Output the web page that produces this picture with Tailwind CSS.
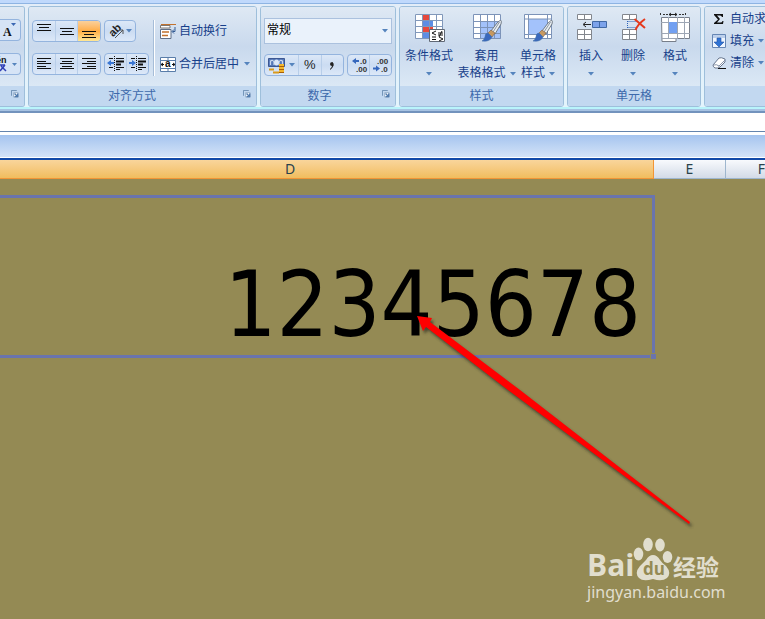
<!DOCTYPE html>
<html lang="zh-CN">
<head>
<meta charset="utf-8">
<title>Spreadsheet</title>
<script src="https://cdn.jsdelivr.net/npm/@tailwindcss/browser@4"></script>
</head>
<body class="flex h-screen flex-col overflow-hidden bg-[#948a54] font-['Liberation_Sans','Noto_Sans_CJK_SC',sans-serif] text-xs text-[#173f8a]">

<svg class="hidden">
  <symbol id="down" viewBox="0 0 6 4"><path d="M0 0H6L3 3.5Z" fill="#5584bd"/></symbol>
  <symbol id="launch" viewBox="0 0 9 9"><path d="M.5 6.500V.5H6.500" fill="none" stroke="#6588ad"/><path d="M3 3H8V8H3Z" fill="#fff" stroke="#91aac5"/><path d="M4 4L7 7M7.500 4V7.500H4" fill="none" stroke="#507bad" stroke-width="1.500"/></symbol>
  <symbol id="grid" viewBox="0 0 32 32"><path d="M2 1H30V26H2Z" fill="#fff"/><path d="M9 8H30V26H9Z" fill="#a3c2fb"/><path d="M2.500 1.500H29.500V25.500H2.500ZM2 8.500H30M2 14.500H30M2 20.500H30M9.500 1V26M16.500 1V26M23.500 1V26" fill="none" stroke="#7c93b8"/></symbol>
  <symbol id="brush" viewBox="0 0 20 22"><path d="M18.500 0Q20 1 19 4L13 14L9 11L15 3Z" fill="#e8edf1" stroke="#59636f" stroke-width=".8"/><path d="M17.500 2L11 12" stroke="#8b98a5"/><path d="M9 10L13 13L10 17L6 13Z" fill="#c79961" stroke="#866b55" stroke-width=".7"/><path d="M6 13Q3 13 3 17Q2 20 0 21Q8 22 10 17Z" fill="#3a68bd" stroke="#4673ad" stroke-width=".6"/></symbol>
</svg>

<header class="shrink-0 border-b-2 border-[#7393bd] bg-[#c0d9fc]">
  <div class="h-1 border-b border-[#8eb4e3]"></div>
  <div class="flex gap-[3px] overflow-hidden border-b-2 border-b-[#b9f4fb] bg-linear-to-b from-[#e3edf8] to-[#e3f4fc] pt-0.5">

    <section aria-label="字体" class="flex h-[101px] w-[25px] shrink-0 flex-col overflow-hidden rounded-r-[3px] border border-l-0 border-[#9ebfdb] bg-[#d2e0f0]">
      <div class="flex grow flex-col gap-3 bg-linear-to-b from-[#dfe9f4] via-[#c9d9ed] to-[#dbe8f5] pt-3">
        <button aria-label="缩小字号" class="h-[22px] w-[21px] rounded-r-sm border border-l-0 border-[#94b4de] bg-[#d6e4f6]"><svg class="h-5 w-5" viewBox="0 0 20 20"><path d="M11 3H16L13.500 6Z" fill="#3b67b3"/><text x="3" y="16" font-family="Liberation Serif" font-weight="bold" font-size="12" fill="#111">A</text></svg></button>
        <button aria-label="拼音指南" class="h-[22px] w-[21px] rounded-r-sm border border-l-0 border-[#94b4de] bg-[#d6e4f6]"><svg class="h-5 w-5" viewBox="0 0 20 20"><text x="-4" y="9" font-weight="bold" font-size="9" fill="#111">én</text><path d="M0 11H5M0 17L5 11M1 12L6 17" stroke="#3140b5" stroke-width="1.500"/><path d="M12 9H17L14.500 12Z" fill="#5584bd"/></svg></button>
      </div>
      <div class="flex h-5 items-center justify-end bg-[#c2d8f0] pr-[5px] pb-1"><button aria-label="字体设置"><svg class="block h-2 w-2"><use href="#launch"/></svg></button></div>
    </section>

    <section aria-label="对齐方式" class="flex h-[101px] w-[229px] shrink-0 flex-col overflow-hidden rounded-[3px] border border-[#9ebfdb]">
      <div class="flex grow bg-linear-to-b from-[#dfe9f4] via-[#c9d9ed] to-[#dbe8f5] pt-[13px] pl-[3px]">
        <div class="flex flex-col gap-[11px]">
          <div class="flex gap-[3px]">
            <div class="flex h-[22px] w-[69px] divide-x divide-[#b8cee9] overflow-hidden rounded-sm border border-[#94b4de] bg-linear-to-b from-[#dce8f7] via-[#cbdcf2] to-[#dce8f8]">
              <button aria-label="顶端对齐" class="flex-1"><svg shape-rendering="crispEdges" class="mx-auto block h-5 w-5" viewBox="0 0 20 20"><path d="M3 3.500H17M5 6.500H15M3 9.500H17" stroke="#111"/></svg></button>
              <button aria-label="垂直居中" class="flex-1"><svg shape-rendering="crispEdges" class="mx-auto block h-5 w-5" viewBox="0 0 20 20"><path d="M3 7.500H17M5 10.500H15M3 13.500H17" stroke="#111"/></svg></button>
              <button aria-label="底端对齐" class="flex-1 bg-linear-to-b from-[#fad09a] via-[#ffad43] to-[#ffe795]"><svg shape-rendering="crispEdges" class="mx-auto block h-5 w-5" viewBox="0 0 20 20"><path d="M3 10.500H17M5 13.500H15M3 16.500H17" stroke="#111"/></svg></button>
            </div>
            <button aria-label="方向" class="flex h-[22px] w-8 items-center rounded-sm border border-[#94b4de] bg-linear-to-b from-[#dce8f7] via-[#cbdcf2] to-[#dce8f8] pl-[3px]"><svg class="h-4 w-[18px] shrink-0" viewBox="0 0 18 16"><text x="1" y="11" transform="rotate(-45 7 8)" font-family="Liberation Sans" font-weight="bold" font-size="11" fill="#222">ab</text><path d="M7 15L15 7M11 7H15V11" fill="none" stroke="#555"/></svg><svg class="h-1 w-1.5 shrink-0"><use href="#down"/></svg></button>
          </div>
          <div class="flex gap-[3px]">
            <div class="flex h-[22px] w-[69px] divide-x divide-[#b8cee9] rounded-sm border border-[#94b4de] bg-linear-to-b from-[#dce8f7] via-[#cbdcf2] to-[#dce8f8]">
              <button aria-label="左对齐" class="flex-1"><svg shape-rendering="crispEdges" class="mx-auto block h-5 w-5" viewBox="0 0 20 20"><path d="M3 4.500H17M3 7.500H12M3 9.500H17M3 12.500H12M3 14.500H17" stroke="#111"/></svg></button>
              <button aria-label="居中" class="flex-1"><svg shape-rendering="crispEdges" class="mx-auto block h-5 w-5" viewBox="0 0 20 20"><path d="M3 4.500H17M5 7.500H15M3 9.500H17M5 12.500H15M3 14.500H17" stroke="#111"/></svg></button>
              <button aria-label="右对齐" class="flex-1"><svg shape-rendering="crispEdges" class="mx-auto block h-5 w-5" viewBox="0 0 20 20"><path d="M3 4.500H17M8 7.500H17M3 9.500H17M8 12.500H17M3 14.500H17" stroke="#111"/></svg></button>
            </div>
            <div class="flex h-[22px] w-[45px] divide-x divide-[#b8cee9] rounded-sm border border-[#94b4de] bg-linear-to-b from-[#dce8f7] via-[#cbdcf2] to-[#dce8f8]">
              <button aria-label="减少缩进" class="flex-1"><svg class="mx-auto block h-5 w-5" viewBox="0 0 20 20"><path d="M3 4.500H7M10 4.500H18M3 13.500H7M10 13.500H18M10 15.500H14" stroke="#111"/><path d="M10 7.500H18M10 10.500H15" stroke="#111" stroke-width="2"/><path d="M8.500 2V18" stroke="#111" stroke-dasharray="1 1"/><path d="M1 9L5 6V8H8V10H5V12Z" fill="#3976d3"/></svg></button>
              <button aria-label="增加缩进" class="flex-1"><svg class="mx-auto block h-5 w-5" viewBox="0 0 20 20"><path d="M3 4.500H7M10 4.500H18M3 13.500H7M10 13.500H18M10 15.500H14" stroke="#111"/><path d="M10 7.500H18M10 10.500H15" stroke="#111" stroke-width="2"/><path d="M8.500 2V18" stroke="#111" stroke-dasharray="1 1"/><path d="M8 9L4 6V8H1V10H4V12Z" fill="#3976d3"/></svg></button>
            </div>
          </div>
        </div>
        <div class="ml-1 h-14 w-0.5 border-l border-[#a6bdd8] bg-white"></div>
        <div class="ml-[5px] flex flex-col gap-[11px]">
          <button class="flex h-[22px] items-center gap-[3px]"><svg class="h-4 w-4" viewBox="0 0 16 16"><path d="M.5 2.500H10V5H.5Z" fill="#fff" stroke="#7d7772"/><path d="M1 1.500H16" stroke="#c2722e"/><path d="M.5 6.500H11V15.500H.5Z" fill="#fff" stroke="#5f6f87"/><path d="M2 9H9M2 12.500H8" stroke="#c2722e" stroke-width="1.500"/><path d="M15 4V8.500H12.500M14 6.500L12 8.500L14 10.500" fill="none" stroke="#335b93"/></svg>自动换行</button>
          <button class="flex h-[22px] items-center gap-[3px]"><svg class="h-4 w-4" viewBox="0 0 16 16"><path d="M.5 1.500H15.500V15.500H.5Z" fill="#fff" stroke="#597da9"/><path d="M1 4.500H15M1 12.500H15M8 1V4M8 13V16" stroke="#597da9"/><path d="M1 8.500H4M15 8.500H12M3 7L1 8.500L3 10M13 7L15 8.500L13 10" fill="none" stroke="#111"/><text x="5" y="11" font-family="Liberation Sans" font-size="10" font-weight="bold" fill="#111">a</text></svg>合并后居中<svg class="ml-0.5 h-1 w-1.5"><use href="#down"/></svg></button>
        </div>
      </div>
      <div class="flex h-5 items-center bg-[#c2d8f0] pr-[5px] text-[#3d69ab]"><span class="grow text-center -indent-2">对齐方式</span><button aria-label="对齐设置" class="pb-1"><svg class="block h-2 w-2"><use href="#launch"/></svg></button></div>
    </section>

    <section aria-label="数字" class="flex h-[101px] w-[136px] shrink-0 flex-col overflow-hidden rounded-[3px] border border-[#9ebfdb]">
      <div class="flex grow flex-col gap-[10px] bg-linear-to-b from-[#dfe9f4] via-[#c9d9ed] to-[#dbe8f5] px-[3px] pt-[11px]">
        <div class="relative">
          <select aria-label="数字格式" class="block h-[26px] w-full appearance-none border border-[#abc1de] bg-[#eaf2fb] pb-0.5 pl-0.5 text-black"><option>常规</option></select>
          <svg class="pointer-events-none absolute top-[11px] right-1 h-1 w-1.5"><use href="#down"/></svg>
        </div>
        <div class="flex justify-between">
          <div class="flex h-[22px] w-20 divide-x divide-[#b8cee9] rounded-sm border border-[#94b4de] bg-linear-to-b from-[#dce8f7] via-[#cbdcf2] to-[#dce8f8]">
            <button aria-label="会计数字格式" class="flex w-[34px] items-center gap-[3px] pl-[3px]"><svg class="h-[17px] w-[18px] shrink-0" viewBox="0 0 18 17"><path d="M.5 1.500H16.500V9.500H.5Z" fill="#5578b8" stroke="#3d5893"/><path d="M2.500 8V4Q5 2.500 6 5V8M14.500 8V4Q12 2.500 11 5V8" fill="none" stroke="#c9d8ef" stroke-width="1.200"/><ellipse cx="8.500" cy="5.500" rx="2.500" ry="3" fill="#dbe6f7"/><path d="M11 7H16V16H11Z" fill="#f4b62d"/><path d="M11 9.500H16M11 12.500H16M11 15.500H16" stroke="#a65f09"/><path d="M1 12.500H6M5 15.500H11" stroke="#d99a1d" stroke-width="2"/></svg><svg class="h-1 w-1.5 shrink-0"><use href="#down"/></svg></button>
            <button aria-label="百分比样式" class="flex-1 text-[13px] leading-5 text-[#222]">%</button>
            <button aria-label="千位分隔样式" class="flex-1"><svg class="mx-auto block h-5 w-5" viewBox="0 0 20 20"><path d="M8 9Q8 7 10.500 7Q14 10 8 15L8 14Q10 12 10 11Q8 11 8 9Z" fill="#222"/></svg></button>
          </div>
          <div class="flex h-[22px] w-[45px] divide-x divide-[#b8cee9] rounded-sm border border-[#94b4de] bg-linear-to-b from-[#dce8f7] via-[#cbdcf2] to-[#dce8f8]">
            <button aria-label="增加小数位数" class="flex-1"><svg class="mx-auto block h-5 w-5" viewBox="0 0 20 20" font-family="Liberation Sans" font-weight="bold" font-size="8" fill="#333"><text x="11" y="9">.0</text><text x="7" y="17">.00</text><path d="M3 6L7 3V5H10V7H7V9Z" fill="#3567bd"/></svg></button>
            <button aria-label="减少小数位数" class="flex-1"><svg class="mx-auto block h-5 w-5" viewBox="0 0 20 20" font-family="Liberation Sans" font-weight="bold" font-size="8" fill="#333"><text x="6" y="9">.00</text><text x="10" y="17">.0</text><path d="M9 13.500L5 10.500V12.500H2V14.500H5V16.500Z" fill="#3567bd"/></svg></button>
          </div>
        </div>
      </div>
      <div class="flex h-5 items-center bg-[#c2d8f0] pr-[5px] text-[#3d69ab]"><span class="grow text-center -indent-1">数字</span><button aria-label="数字设置" class="pb-1"><svg class="block h-2 w-2"><use href="#launch"/></svg></button></div>
    </section>

    <section aria-label="样式" class="flex h-[101px] w-[165px] shrink-0 flex-col overflow-hidden rounded-[3px] border border-[#9ebfdb]">
      <div class="flex grow bg-linear-to-b from-[#dfe9f4] via-[#c9d9ed] to-[#dbe8f5] pt-[5px] leading-[17px]">
        <button class="flex w-[58px] flex-col items-center"><svg class="h-9 w-8" viewBox="0 0 32 34"><path d="M2 1H29V25H2Z" fill="#fff"/><path d="M9 1H16V7H9ZM9 13H20V19H9Z" fill="#e6493d"/><path d="M9 7H20V13H9ZM9 19H16V25H9Z" fill="#5d8de4"/><path d="M2.500 1.500H29.500V25.500H2.500ZM2 7.500H30M2 13.500H30M2 19.500H30M9.500 1V26M16.500 1V26M23.500 1V26" fill="none" stroke="#8198ba"/><path d="M16.500 16.500H31.500V28.500H16.500Z" fill="#fff" stroke="#606875"/><path d="M23 18L19 20L23 22M19 24H23M19 26.500H23M25 20H30M25 22H30M29 18L26 24M26 24L30 26L26 28" fill="none" stroke="#111"/></svg>条件格式<span class="flex h-[17px] items-center"><svg class="h-1 w-1.5"><use href="#down"/></svg></span></button>
        <button class="flex w-[57px] flex-col items-center"><svg class="h-9 w-8" viewBox="0 0 32 34"><use href="#grid" width="32" height="32"/><use href="#brush" x="11" y="7" width="20" height="22"/></svg>套用<span class="flex items-center gap-1 whitespace-nowrap">表格格式<svg class="h-1 w-1.5"><use href="#down"/></svg></span></button>
        <button class="flex w-[46px] flex-col items-center"><svg class="h-9 w-8" viewBox="0 0 32 34"><path d="M2.500 1.500H29.500V25.500H2.500Z" fill="#fff" stroke="#7c93b8"/><path d="M7 6H25V21H7Z" fill="#a3c2fb"/><path d="M2 6H30M2 21.500H30M6.500 1V26M25.500 1V26" stroke="#7c93b8"/><use href="#brush" x="11" y="7" width="20" height="22"/></svg>单元格<span class="flex items-center gap-1">样式<svg class="h-1 w-1.5"><use href="#down"/></svg></span></button>
      </div>
      <div class="h-5 bg-[#c2d8f0] text-center leading-[21px] text-[#3d69ab]">样式</div>
    </section>

    <section aria-label="单元格" class="flex h-[101px] w-[134px] shrink-0 flex-col overflow-hidden rounded-[3px] border border-[#9ebfdb]">
      <div class="flex grow bg-linear-to-b from-[#dfe9f4] via-[#c9d9ed] to-[#dbe8f5] pt-[5px] pl-0.5 leading-[17px]">
        <button class="flex w-[42px] flex-col items-center"><svg class="h-9 w-8" viewBox="0 0 32 34"><path d="M2.500 1.500H16.500V6.500H2.500ZM9.500 1V7M2.500 16.500H16.500V26.500H2.500ZM2 21.500H17M9.500 16V27" fill="#fff" stroke="#82868d"/><path d="M17.500 8.500H31.500V14.500H17.500Z" fill="#7da3eb" stroke="#4169a5"/><path d="M24.500 8V15" stroke="#4169a5"/><path d="M16 11.500H9M11 9L8 11.500L11 14" fill="none" stroke="#222"/></svg>插入<span class="flex h-[17px] items-center"><svg class="h-1 w-1.5"><use href="#down"/></svg></span></button>
        <button class="flex w-[42px] flex-col items-center"><svg class="h-9 w-8" viewBox="0 0 32 34"><path d="M5.500 1.500H19.500V6.500H5.500ZM12.500 1V7M5.500 16.500H19.500V26.500H5.500ZM5 21.500H20M12.500 16V27" fill="#fff" stroke="#82868d"/><path d="M10.500 8.500H20M10.500 14.500H20M10.500 8V15" stroke="#2d62b6" stroke-dasharray="1 1"/><path d="M17.500 6L28 15M28 6Q21 11 18.500 17" fill="none" stroke="#e5391d" stroke-width="2"/></svg>删除<span class="flex h-[17px] items-center"><svg class="h-1 w-1.5"><use href="#down"/></svg></span></button>
        <button class="flex w-[42px] flex-col items-center"><svg class="h-9 w-8" viewBox="0 0 32 34"><path d="M2.500 4.500H30.500V25.500H17V28.500H3Z" fill="#fff" stroke="#777e8a"/><path d="M2 9.500H31M2 20.500H31M2 25.500H18M9.500 4V26M18.500 4V26M25.500 4V26" stroke="#9da6b4"/><path d="M10 9H18V20H10Z" fill="#72a0f1"/><path d="M1.500 0V3M26.500 0V3M4 1.500H9M20 1.500H25" stroke="#333" stroke-dasharray="2 1"/><path d="M10 1.500H18M12 0L10 1.500L12 3M16 0L18 1.500L16 3" fill="none" stroke="#222"/></svg>格式<span class="flex h-[17px] items-center"><svg class="h-1 w-1.5"><use href="#down"/></svg></span></button>
      </div>
      <div class="h-5 bg-[#c2d8f0] text-center leading-[21px] text-[#3d69ab]">单元格</div>
    </section>

    <section aria-label="编辑" class="flex h-[101px] w-[160px] shrink-0 flex-col overflow-hidden rounded-[3px] border border-[#9ebfdb]">
      <div class="flex grow flex-col items-start bg-linear-to-b from-[#dfe9f4] via-[#c9d9ed] to-[#dbe8f5] pt-px pl-[7px]">
        <button class="flex h-[22px] items-center gap-1"><svg class="h-[14px] w-[14px]" viewBox="0 0 14 14"><path d="M2 2H11V5H10Q9.500 3.500 8 3.500H5L8 7L5 10.500H8.500Q10 10.500 10.500 9H11.500L11 12H2V11L6 7.500L2 3Z" fill="#111"/></svg>自动求和</button>
        <button class="flex h-[22px] items-center gap-1"><svg class="h-[14px] w-[14px]" viewBox="0 0 14 14"><path d="M.5 .5H13.500V13.500H.5Z" fill="#eef5ff" stroke="#6686b4"/><path d="M1 1H13V4H1Z" fill="#bdd0ec"/><path d="M5 4H9V8H12L7 13L2 8H5Z" fill="#2f73d5" stroke="#2353a3" stroke-width=".6"/></svg>填充<svg class="h-1 w-1.5"><use href="#down"/></svg></button>
        <button class="flex h-[22px] items-center gap-1"><svg class="h-[14px] w-[14px]" viewBox="0 0 14 14"><path d="M1 9L7 2Q9 1 13 3V6L7 12H3Q1 11 1 9Z" fill="#fff" stroke="#66758d"/><path d="M1 9Q5 8 7 10L13 4M7 10V12" fill="none" stroke="#8895aa"/><path d="M6 12.500H14" stroke="#111"/></svg>清除<svg class="h-1 w-1.5"><use href="#down"/></svg></button>
      </div>
      <div class="h-5 bg-[#c2d8f0]"></div>
    </section>
  </div>
  <div class="h-0.5 bg-[#a7c3e3]"></div>
</header>

<input aria-label="编辑栏" class="block h-[18px] w-full shrink-0 bg-white px-2 text-black outline-none">
<div class="h-[29px] shrink-0 border-t border-b-2 border-t-[#6484ad] border-b-[#134aa8] bg-white pt-[3px] pb-px"><div class="h-full bg-linear-to-b from-[#a5c4ef] to-[#d4e3f7]"></div></div>

<main class="relative grow overflow-hidden">
  <table class="-ml-[73px] w-[871px] table-fixed border-separate border-spacing-0 font-['Noto_Sans','Noto_Sans_CJK_SC',sans-serif] text-[14px] text-[#29424d]">
    <colgroup><col class="w-[727px]"><col class="w-[72px]"><col class="w-[72px]"></colgroup>
    <thead><tr class="h-[19px]">
      <th scope="col" class="border-r border-b border-[#f29536] bg-linear-to-b from-[#f9d59b] to-[#f1bd5d] p-0 leading-[18px] font-normal">D</th>
      <th scope="col" class="border-r border-b border-[#9eb6ce] bg-linear-to-b from-[#f8fafd] to-[#d3dbe7] p-0 leading-[18px] font-normal">E</th>
      <th scope="col" class="border-r border-b border-[#9eb6ce] bg-linear-to-b from-[#f8fafd] to-[#d3dbe7] p-0 leading-[18px] font-normal">F</th>
    </tr></thead>
    <tbody>
      <tr class="h-[18px]"><td></td><td></td><td></td></tr>
      <tr class="h-[160px]">
        <td class="relative p-0 pr-[13px] text-right align-bottom font-['DejaVu_Sans_Condensed','DejaVu_Sans',sans-serif] text-[91px] leading-[104px] text-black">12345678
          <div class="pointer-events-none absolute -inset-px -top-0.5 border-[3px] border-[#6a74ad]"></div>
          <div class="absolute -right-0.5 -bottom-0.5 size-[6px] border-t border-l border-[#948a54] bg-[#6a74ad]"></div>
        </td><td></td><td></td>
      </tr>
    </tbody>
  </table>

  <svg aria-hidden="true" class="pointer-events-none absolute top-[155px] left-[415px] h-[215px] w-[280px]" viewBox="415 315 280 215">
    <defs><filter id="soft" x="-10%" y="-10%" width="120%" height="120%"><feGaussianBlur stdDeviation="1.500"/></filter></defs>
    <path d="M417 316L432 318L430 322L520 390L690 522L689 524L508 390L426 327L423 331Z" transform="translate(2 3)" fill="#2b2920" opacity=".7" filter="url(#soft)"/>
    <path d="M417 316L432 318L430 322L520 390L690 522L689 524L508 390L426 327L423 331Z" fill="#f00"/>
  </svg>

  <div class="absolute right-[42px] bottom-4 w-[136px] text-[#e1dece]">
    <div class="flex h-[45px] items-end">
      <span class="w-[45px] font-['Open_Sans','Noto_Sans',sans-serif] text-[30px] leading-8 font-bold">Bai</span>
      <svg aria-label="du" class="h-11 w-[41px] shrink-0" viewBox="0 0 41 44"><g fill="currentColor"><ellipse cx="6.500" cy="17" rx="4.800" ry="6.500"/><ellipse cx="16" cy="7.500" rx="4.800" ry="6.700"/><ellipse cx="28" cy="8" rx="4.800" ry="6.500"/><ellipse cx="35.500" cy="20" rx="4.800" ry="6"/><path d="M21 18Q25 18 28 23Q30 26 34 29Q40 36 35 41Q30 45 21 42Q11 45 7 41Q2 36 8 29L14 23Q17 18 21 18Z"/></g><text x="11" y="38" font-family="Open Sans" font-weight="bold" font-size="17" fill="#948a54">du</text></svg>
      <span class="font-['Noto_Sans_CJK_SC',sans-serif] text-[23px] leading-[30px] font-bold whitespace-nowrap">经验</span>
    </div>
    <div class="font-['Noto_Sans',sans-serif] text-[16px] leading-[22px] whitespace-nowrap">jingyan.baidu.com</div>
  </div>
</main>
</body>
</html>
